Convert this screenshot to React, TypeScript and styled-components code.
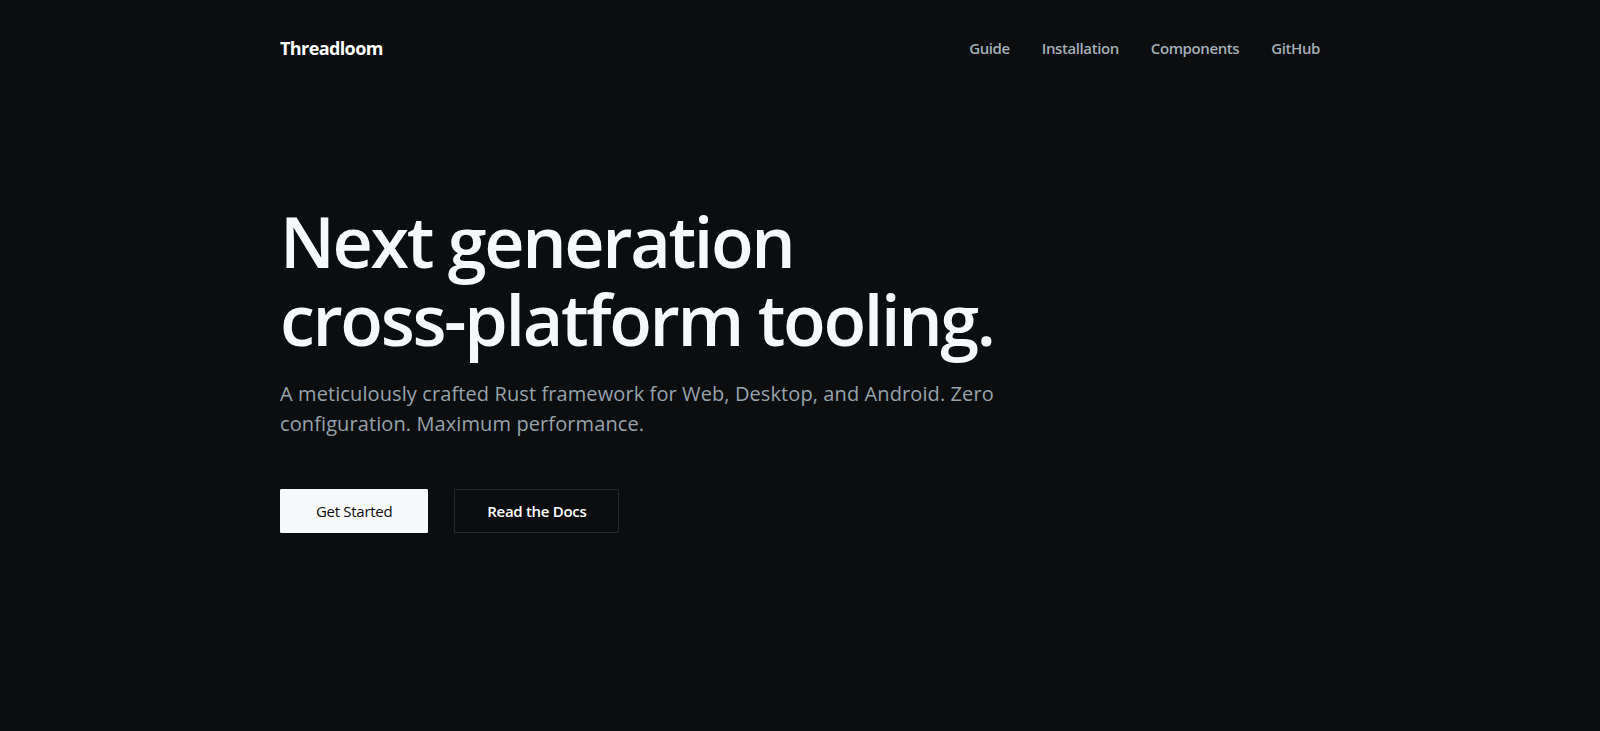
import styled, { createGlobalStyle } from "styled-components";

const NAV_LINKS = ["Guide", "Installation", "Components", "GitHub"];

const GlobalStyle = createGlobalStyle`
    html, body {
        margin: 0;
        padding: 0;
        background: #0b0d0f;
    }
    body {
        font-family: "Open Sans", "Noto Sans", sans-serif;
        -webkit-font-smoothing: antialiased;
    }
    * {
        box-sizing: border-box;
    }
`;

const App = () => {
    return (
        <Page>
            <GlobalStyle />
            <Container>
                <Header>
                    <Logo href="#">Threadloom</Logo>
                    <Nav>
                        {NAV_LINKS.map((link) => (
                            <NavLink key={link} href="#">
                                {link}
                            </NavLink>
                        ))}
                    </Nav>
                </Header>
                <Hero>
                    <Title>
                        Next generation
                        <br />
                        cross-platform tooling.
                    </Title>
                    <Lead>
                        A meticulously crafted Rust framework for Web, Desktop, and Android. Zero
                        configuration. Maximum performance.
                    </Lead>
                    <Actions>
                        <Button type="button" $variant="primary">
                            Get Started
                        </Button>
                        <Button type="button" $variant="ghost">
                            Read the Docs
                        </Button>
                    </Actions>
                </Hero>
            </Container>
        </Page>
    );
};

export default App;

const Page = styled.div`
    min-height: 100vh;
    background: #0b0d0f;
    color: #f5f6f7;
`;

const Container = styled.div`
    max-width: 1040px;
    margin: 0 auto;
    display: flex;
    flex-direction: column;
`;

const Header = styled.header`
    height: 96px;
    display: flex;
    align-items: center;
    justify-content: space-between;
`;

const Logo = styled.a`
    color: #ffffff;
    text-decoration: none;
    font-size: 18px;
    font-weight: 700;
    letter-spacing: -0.6px;
`;

const Nav = styled.nav`
    display: flex;
    align-items: center;
    gap: 32px;
`;

const NavLink = styled.a`
    color: #a3aeb6;
    text-decoration: none;
    font-size: 15px;
    font-weight: 600;
    letter-spacing: -0.4px;
`;

const Hero = styled.section`
    display: flex;
    flex-direction: column;
    align-items: flex-start;
    padding-top: 106px;
`;

const Title = styled.h1`
    margin: 0;
    color: #f7f8f9;
    font-size: 70px;
    line-height: 78px;
    font-weight: 600;
    letter-spacing: -2.35px;
`;

const Lead = styled.p`
    margin: 21px 0 0;
    max-width: 740px;
    color: #97a2ab;
    font-size: 20px;
    line-height: 30px;
    font-weight: 400;
    letter-spacing: 0.1px;
`;

const Actions = styled.div`
    margin-top: 50px;
    display: flex;
    gap: 26px;
`;

const Button = styled.button<{ $variant: "primary" | "ghost" }>`
    height: 44px;
    padding: 0 ${({ $variant }) => ($variant === "primary" ? "35px" : "32px")};
    border-radius: 1px;
    font-family: inherit;
    font-size: 15px;
    letter-spacing: -0.3px;
    cursor: pointer;
    border: 1px solid ${({ $variant }) => ($variant === "primary" ? "#f8f9fa" : "#25292d")};
    background: ${({ $variant }) => ($variant === "primary" ? "#f8f9fa" : "transparent")};
    color: ${({ $variant }) => ($variant === "primary" ? "#0b0d0f" : "#ffffff")};
    font-weight: ${({ $variant }) => ($variant === "primary" ? 500 : 600)};
`;
